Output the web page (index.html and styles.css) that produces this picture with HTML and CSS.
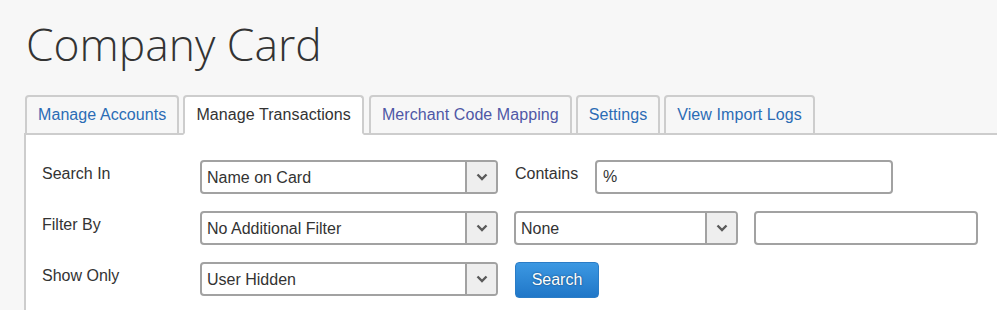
FILE: index.html
```html
<!DOCTYPE html>
<html lang="en">
<head>
  <meta charset="UTF-8" />
  <meta name="viewport" content="width=device-width, initial-scale=1.0"/>
  <title>Company Card</title>
  <link rel="stylesheet" href="styles.css">
</head>
<body>
  <h1 class="page-title">Company Card</h1>

  <div class="card">
    <ul class="tabs">
      <li class="tab"><a href="#">Manage Accounts</a></li>
      <li class="tab active"><a href="#">Manage Transactions</a></li>
      <li class="tab visited"><a href="#">Merchant Code Mapping</a></li>
      <li class="tab"><a href="#">Settings</a></li>
      <li class="tab"><a href="#">View Import Logs</a></li>
    </ul>

    <div class="panel">
      <div class="row">
        <label class="label">Search In</label>
        <div class="select wide">
          <select><option>Name on Card</option></select>
          <span class="arrow"><svg width="12" height="8" viewBox="0 0 12 8"><path d="M1.5 1.5 L6 6 L10.5 1.5" fill="none" stroke="#5a5a5a" stroke-width="2.4"/></svg></span>
        </div>
        <label class="label contains">Contains</label>
        <input class="text wide" type="text" value="%">
      </div>

      <div class="row">
        <label class="label">Filter By</label>
        <div class="select wide">
          <select><option>No Additional Filter</option></select>
          <span class="arrow"><svg width="12" height="8" viewBox="0 0 12 8"><path d="M1.5 1.5 L6 6 L10.5 1.5" fill="none" stroke="#5a5a5a" stroke-width="2.4"/></svg></span>
        </div>
        <div class="select narrow">
          <select><option>None</option></select>
          <span class="arrow"><svg width="12" height="8" viewBox="0 0 12 8"><path d="M1.5 1.5 L6 6 L10.5 1.5" fill="none" stroke="#5a5a5a" stroke-width="2.4"/></svg></span>
        </div>
        <input class="text narrow" type="text">
      </div>

      <div class="row">
        <label class="label">Show Only</label>
        <div class="select wide">
          <select><option>User Hidden</option></select>
          <span class="arrow"><svg width="12" height="8" viewBox="0 0 12 8"><path d="M1.5 1.5 L6 6 L10.5 1.5" fill="none" stroke="#5a5a5a" stroke-width="2.4"/></svg></span>
        </div>
        <button class="btn-search">Search</button>
      </div>
    </div>
  </div>
</body>
</html>
```

FILE: styles.css
```css
body {
  margin: 0;
  background: #f7f7f7;
  font-family: "Liberation Sans", Arial, sans-serif;
  font-size: 16px;
  color: #333;
}

.page-title {
  margin: 0;
  padding: 14px 0 0 26px;
  font-family: "Open Sans", sans-serif;
  font-weight: 300;
  font-size: 44.4px;
  line-height: 61px;
  color: #333;
}

.card {
  margin: 20px 0 0 24px;
}

.tabs {
  display: flex;
  list-style: none;
  margin: 0;
  padding: 0 0 0 1px;
  border-bottom: 2px solid #cdcdcd;
}

.tab {
  margin: 0 4px -2px 0;
  border: 2px solid #cdcdcd;
  border-radius: 4px 4px 0 0;
  background: #f7f7f7;
}

.tab a {
  display: block;
  padding: 8px 11px;
  line-height: 20px;
  letter-spacing: 0.08px;
  color: #2b6cb5;
  text-decoration: none;
}

.tab.active {
  background: #fff;
  border-bottom-color: #fff;
}

.tab.active a {
  color: #333;
}

.tab.visited {
  margin-left: 1px;
}

.tab.visited a {
  color: #4f58a6;
}

.panel {
  background: #fff;
  border-left: 2px solid #cdcdcd;
  padding: 25px 0 20px 16px;
}

.row {
  display: flex;
  align-items: flex-start;
  gap: 16px;
  margin-bottom: 17px;
}

.label {
  width: 142px;
  padding-top: 4px;
  line-height: 20px;
}

.label.contains {
  width: 64px;
  margin-left: 1px;
}

.select {
  display: flex;
  height: 34px;
  box-sizing: border-box;
  border: 2px solid #a2a2a2;
  border-radius: 4px;
  background: #fff;
  overflow: hidden;
}

.select select {
  flex: 1;
  appearance: none;
  border: none;
  background: transparent;
  padding: 0 5px;
  font-family: inherit;
  font-size: 16px;
  color: #333;
}

.arrow {
  width: 29px;
  display: flex;
  align-items: center;
  justify-content: center;
  background: #eee;
  border-left: 2px solid #a2a2a2;
}

.wide {
  width: 298px;
}

.narrow {
  width: 224px;
}

.text {
  height: 34px;
  box-sizing: border-box;
  border: 2px solid #a2a2a2;
  border-radius: 4px;
  padding: 0 6px;
  font-family: inherit;
  font-size: 16px;
  color: #333;
}

.btn-search {
  width: 84px;
  height: 36px;
  margin: 0 0 0 1px;
  border: 1px solid #2a7cc6;
  border-radius: 4px;
  background: linear-gradient(#3c98e2, #2077c8);
  color: #fff;
  font-family: inherit;
  font-size: 16px;
  text-shadow: 0 0 2px #0c3a66;
}
```
